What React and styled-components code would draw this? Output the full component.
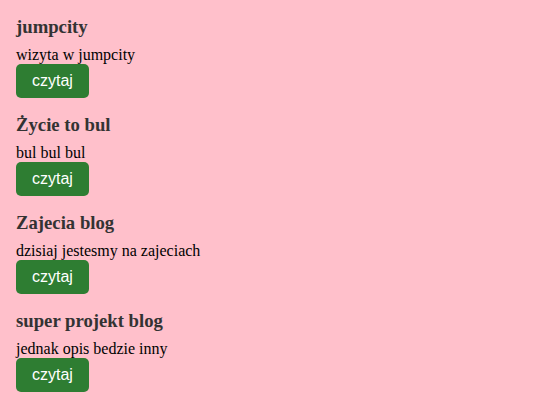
import React from 'react';
import styled, { createGlobalStyle } from "styled-components";

const GlobalStyle = createGlobalStyle`
    html, body {
        margin: 0;
        background: #ffc0cb;
    }
    body {
        padding: 8px;
        font-family: "Liberation Serif", "Times New Roman", serif;
    }
`

const List = styled.div`
    display: flex;
    flex-direction: column;
`

const Post = styled.article`
    display: flex;
    flex-direction: column;
    align-items: flex-start;
    padding: 8px;
`

const Title = styled.h3`
    margin: 0 0 8px;
    font-size: 18.72px;
    line-height: 22px;
    font-weight: bold;
    color: #333;
`

const Desc = styled.p`
    margin: 0;
    font-size: 16px;
    line-height: 18px;
    color: #000;
`

const ReadButton = styled.button`
    height: 34px;
    padding: 0 16px;
    border: none;
    border-radius: 5px;
    background: #2e7d32;
    color: #fff;
    font-family: "Liberation Sans", Arial, sans-serif;
    font-size: 16px;
    line-height: 18px;
    cursor: pointer;
`

const posts = [
    { title: "jumpcity", desc: "wizyta w jumpcity" },
    { title: "Życie to bul", desc: "bul bul bul" },
    { title: "Zajecia blog", desc: "dzisiaj jestesmy na zajeciach" },
    { title: "super projekt blog", desc: "jednak opis bedzie inny" },
];

const App = () => {
    return (
        <>
            <GlobalStyle />
            <List>
                {posts.map((p) => (
                    <Post key={p.title}>
                        <Title>{p.title}</Title>
                        <Desc>{p.desc}</Desc>
                        <ReadButton>czytaj</ReadButton>
                    </Post>
                ))}
            </List>
        </>
    );
};

export default App;
